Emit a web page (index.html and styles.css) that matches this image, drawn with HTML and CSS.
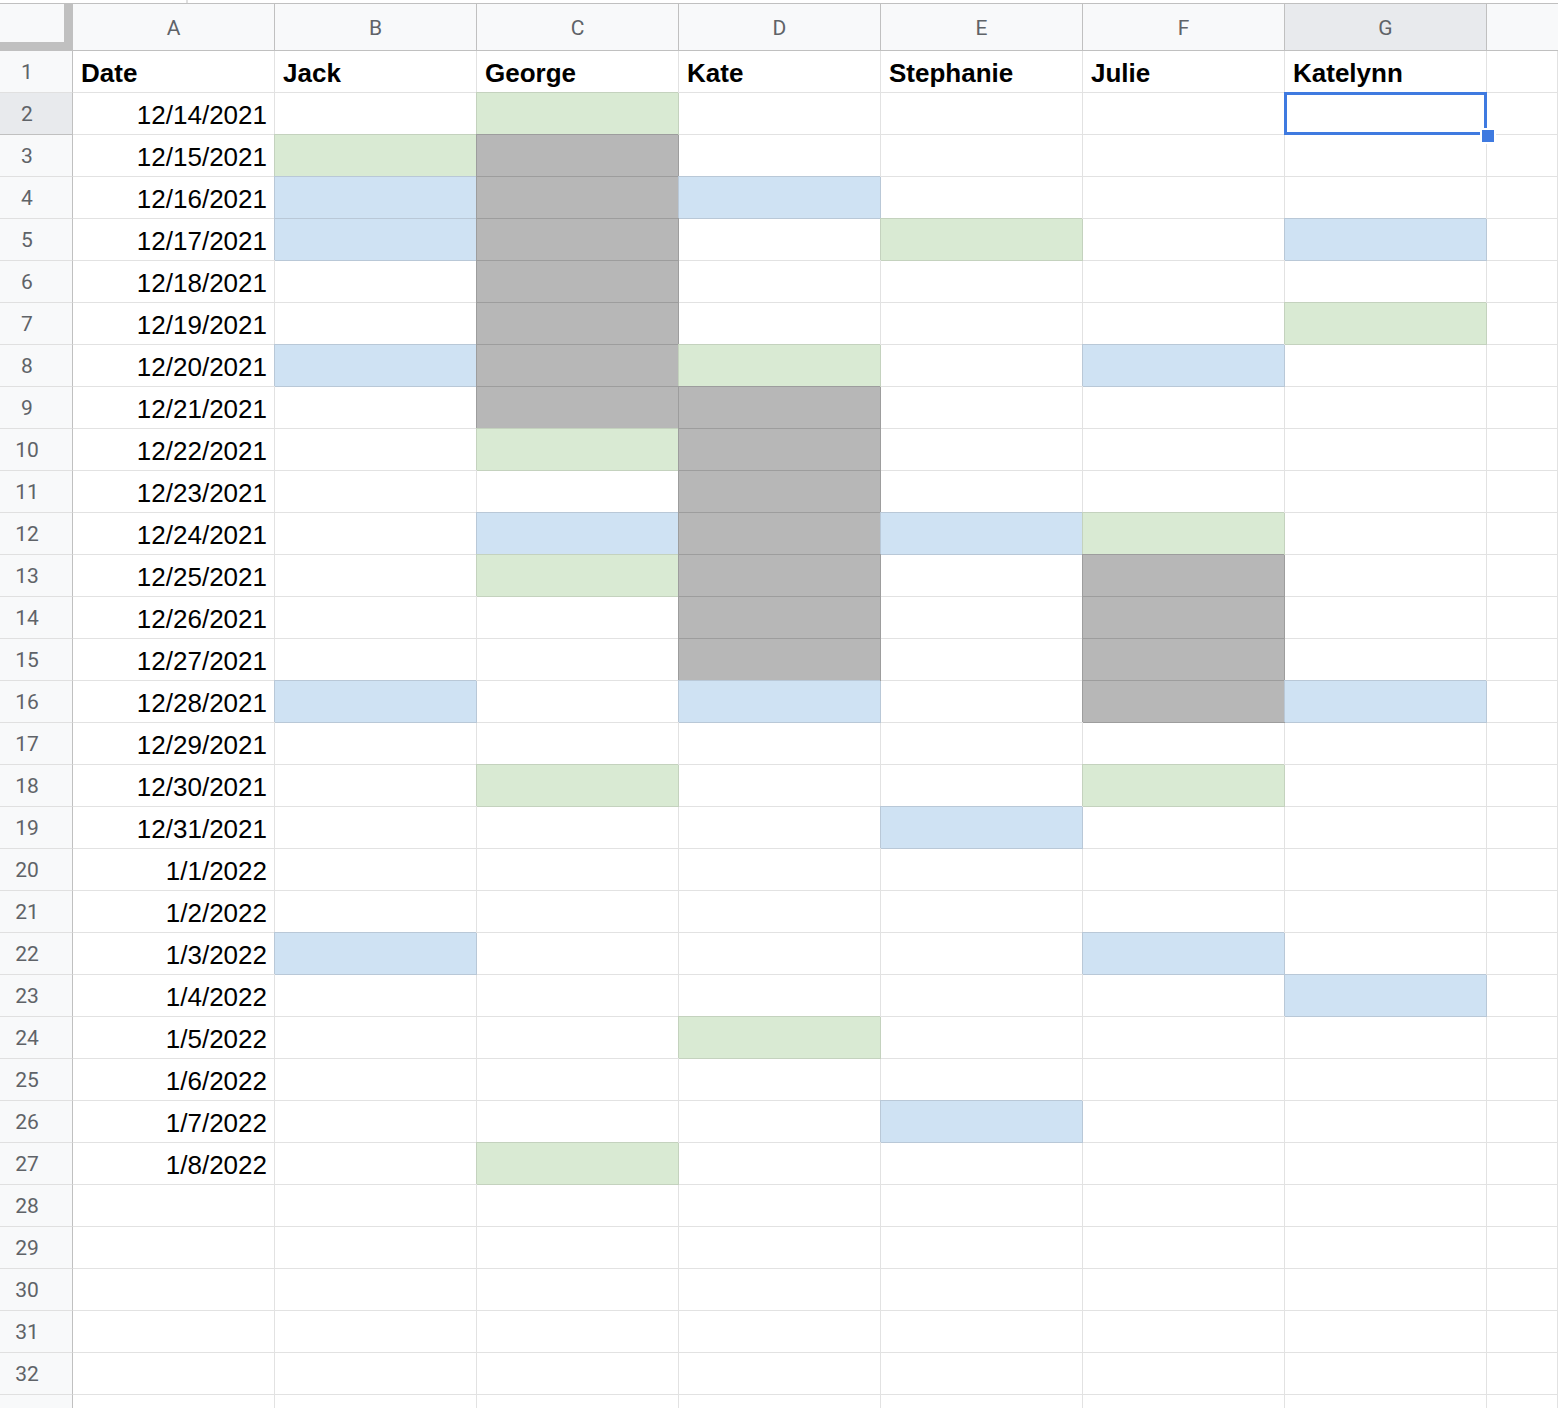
FILE: index.html
```html
<!DOCTYPE html>
<html>
<head>
<meta charset="utf-8">
<title>Sheet</title>
<link rel="stylesheet" href="styles.css">
</head>
<body>
<div class="top"></div>
<div class="row colhead">
  <div class="corner"></div>
  <div class="ch">A</div><div class="ch">B</div><div class="ch">C</div><div class="ch">D</div><div class="ch">E</div><div class="ch">F</div><div class="ch on">G</div><div class="ch"></div>
</div>
<div class="row"><div class="rh">1</div><div class="c t">Date</div><div class="c t">Jack</div><div class="c t">George</div><div class="c t">Kate</div><div class="c t">Stephanie</div><div class="c t">Julie</div><div class="c t">Katelynn</div><div class="c"></div></div>
<div class="row"><div class="rh on">2</div><div class="c d">12/14/2021</div><div class="c"></div><div class="c g"></div><div class="c"></div><div class="c"></div><div class="c"></div><div class="c sel"></div><div class="c"></div></div>
<div class="row"><div class="rh">3</div><div class="c d">12/15/2021</div><div class="c g"></div><div class="c k"></div><div class="c"></div><div class="c"></div><div class="c"></div><div class="c"></div><div class="c"></div></div>
<div class="row"><div class="rh">4</div><div class="c d">12/16/2021</div><div class="c b"></div><div class="c k"></div><div class="c b"></div><div class="c"></div><div class="c"></div><div class="c"></div><div class="c"></div></div>
<div class="row"><div class="rh">5</div><div class="c d">12/17/2021</div><div class="c b"></div><div class="c k"></div><div class="c"></div><div class="c g"></div><div class="c"></div><div class="c b"></div><div class="c"></div></div>
<div class="row"><div class="rh">6</div><div class="c d">12/18/2021</div><div class="c"></div><div class="c k"></div><div class="c"></div><div class="c"></div><div class="c"></div><div class="c"></div><div class="c"></div></div>
<div class="row"><div class="rh">7</div><div class="c d">12/19/2021</div><div class="c"></div><div class="c k"></div><div class="c"></div><div class="c"></div><div class="c"></div><div class="c g"></div><div class="c"></div></div>
<div class="row"><div class="rh">8</div><div class="c d">12/20/2021</div><div class="c b"></div><div class="c k"></div><div class="c g"></div><div class="c"></div><div class="c b"></div><div class="c"></div><div class="c"></div></div>
<div class="row"><div class="rh">9</div><div class="c d">12/21/2021</div><div class="c"></div><div class="c k"></div><div class="c k"></div><div class="c"></div><div class="c"></div><div class="c"></div><div class="c"></div></div>
<div class="row"><div class="rh">10</div><div class="c d">12/22/2021</div><div class="c"></div><div class="c g"></div><div class="c k"></div><div class="c"></div><div class="c"></div><div class="c"></div><div class="c"></div></div>
<div class="row"><div class="rh">11</div><div class="c d">12/23/2021</div><div class="c"></div><div class="c"></div><div class="c k"></div><div class="c"></div><div class="c"></div><div class="c"></div><div class="c"></div></div>
<div class="row"><div class="rh">12</div><div class="c d">12/24/2021</div><div class="c"></div><div class="c b"></div><div class="c k"></div><div class="c b"></div><div class="c g"></div><div class="c"></div><div class="c"></div></div>
<div class="row"><div class="rh">13</div><div class="c d">12/25/2021</div><div class="c"></div><div class="c g"></div><div class="c k"></div><div class="c"></div><div class="c k"></div><div class="c"></div><div class="c"></div></div>
<div class="row"><div class="rh">14</div><div class="c d">12/26/2021</div><div class="c"></div><div class="c"></div><div class="c k"></div><div class="c"></div><div class="c k"></div><div class="c"></div><div class="c"></div></div>
<div class="row"><div class="rh">15</div><div class="c d">12/27/2021</div><div class="c"></div><div class="c"></div><div class="c k"></div><div class="c"></div><div class="c k"></div><div class="c"></div><div class="c"></div></div>
<div class="row"><div class="rh">16</div><div class="c d">12/28/2021</div><div class="c b"></div><div class="c"></div><div class="c b"></div><div class="c"></div><div class="c k"></div><div class="c b"></div><div class="c"></div></div>
<div class="row"><div class="rh">17</div><div class="c d">12/29/2021</div><div class="c"></div><div class="c"></div><div class="c"></div><div class="c"></div><div class="c"></div><div class="c"></div><div class="c"></div></div>
<div class="row"><div class="rh">18</div><div class="c d">12/30/2021</div><div class="c"></div><div class="c g"></div><div class="c"></div><div class="c"></div><div class="c g"></div><div class="c"></div><div class="c"></div></div>
<div class="row"><div class="rh">19</div><div class="c d">12/31/2021</div><div class="c"></div><div class="c"></div><div class="c"></div><div class="c b"></div><div class="c"></div><div class="c"></div><div class="c"></div></div>
<div class="row"><div class="rh">20</div><div class="c d">1/1/2022</div><div class="c"></div><div class="c"></div><div class="c"></div><div class="c"></div><div class="c"></div><div class="c"></div><div class="c"></div></div>
<div class="row"><div class="rh">21</div><div class="c d">1/2/2022</div><div class="c"></div><div class="c"></div><div class="c"></div><div class="c"></div><div class="c"></div><div class="c"></div><div class="c"></div></div>
<div class="row"><div class="rh">22</div><div class="c d">1/3/2022</div><div class="c b"></div><div class="c"></div><div class="c"></div><div class="c"></div><div class="c b"></div><div class="c"></div><div class="c"></div></div>
<div class="row"><div class="rh">23</div><div class="c d">1/4/2022</div><div class="c"></div><div class="c"></div><div class="c"></div><div class="c"></div><div class="c"></div><div class="c b"></div><div class="c"></div></div>
<div class="row"><div class="rh">24</div><div class="c d">1/5/2022</div><div class="c"></div><div class="c"></div><div class="c g"></div><div class="c"></div><div class="c"></div><div class="c"></div><div class="c"></div></div>
<div class="row"><div class="rh">25</div><div class="c d">1/6/2022</div><div class="c"></div><div class="c"></div><div class="c"></div><div class="c"></div><div class="c"></div><div class="c"></div><div class="c"></div></div>
<div class="row"><div class="rh">26</div><div class="c d">1/7/2022</div><div class="c"></div><div class="c"></div><div class="c"></div><div class="c b"></div><div class="c"></div><div class="c"></div><div class="c"></div></div>
<div class="row"><div class="rh">27</div><div class="c d">1/8/2022</div><div class="c"></div><div class="c g"></div><div class="c"></div><div class="c"></div><div class="c"></div><div class="c"></div><div class="c"></div></div>
<div class="row"><div class="rh">28</div><div class="c"></div><div class="c"></div><div class="c"></div><div class="c"></div><div class="c"></div><div class="c"></div><div class="c"></div><div class="c"></div></div>
<div class="row"><div class="rh">29</div><div class="c"></div><div class="c"></div><div class="c"></div><div class="c"></div><div class="c"></div><div class="c"></div><div class="c"></div><div class="c"></div></div>
<div class="row"><div class="rh">30</div><div class="c"></div><div class="c"></div><div class="c"></div><div class="c"></div><div class="c"></div><div class="c"></div><div class="c"></div><div class="c"></div></div>
<div class="row"><div class="rh">31</div><div class="c"></div><div class="c"></div><div class="c"></div><div class="c"></div><div class="c"></div><div class="c"></div><div class="c"></div><div class="c"></div></div>
<div class="row"><div class="rh">32</div><div class="c"></div><div class="c"></div><div class="c"></div><div class="c"></div><div class="c"></div><div class="c"></div><div class="c"></div><div class="c"></div></div>
<div class="row"><div class="rh">33</div><div class="c"></div><div class="c"></div><div class="c"></div><div class="c"></div><div class="c"></div><div class="c"></div><div class="c"></div><div class="c"></div></div>
</body>
</html>
```
FILE: styles.css
```css
* { box-sizing: border-box; }
html, body { margin: 0; padding: 0; background: #fff; }
body {
  width: 1558px;
  height: 1408px;
  overflow: hidden;
  font-family: "Liberation Sans", Arial, sans-serif;
}
.top {
  height: 3px;
  background: linear-gradient(to right, #fff 186px, #e0e0e0 186px, #e0e0e0 188px, #fff 188px);
}
.row {
  display: grid;
  grid-template-columns: 73px repeat(7, 202px) 1fr;
  height: 42px;
}
.colhead {
  height: 48px;
  border-top: 1px solid #c0c0c0;
  background: #f8f9fa;
}
.corner {
  background: #f8f9fa;
  border-right: 9px solid #c0c0c0;
  border-bottom: 9px solid #c0c0c0;
}
.ch {
  border-right: 1px solid #c0c0c0;
  border-bottom: 1px solid #c0c0c0;
  display: flex;
  align-items: center;
  justify-content: center;
  font-family: Roboto, "Liberation Sans", sans-serif;
  font-size: 21px;
  color: #5f6368;
  padding-top: 2px;
}
.ch.on { background: #e8eaed; }
.ch:last-child { border-right: 0; }
.rh {
  background: #f8f9fa;
  border-right: 1px solid #c0c0c0;
  border-bottom: 1px solid #e0e0e0;
  display: flex;
  align-items: center;
  justify-content: center;
  padding-right: 18px;
  font-family: Roboto, "Liberation Sans", sans-serif;
  font-size: 21px;
  color: #5f6368;
}
.rh.on { background: #e8eaed; border-bottom-color: #c0c0c0; }
.c {
  border-right: 1px solid #e2e2e2;
  border-bottom: 1px solid #e2e2e2;
  background: #fff;
  font-size: 26px;
  line-height: 37px;
  padding: 4px 7px 0 8px;
  white-space: nowrap;
  overflow: hidden;
  color: #000;
}
.c.t { font-weight: bold; }
.c.d { text-align: right; }
.c.b { background: #cfe2f3; border-color: #b9c8d7; box-shadow: -1px -1px 0 #b9c8d7; }
.c.g { background: #d9ead3; border-color: #c4d2be; box-shadow: -1px -1px 0 #c4d2be; }
.c.k { background: #b7b7b7; border-color: #9d9d9d; box-shadow: -1px -1px 0 #9d9d9d; }
.c.sel { position: relative; overflow: visible; }
.c.sel::before {
  content: "";
  position: absolute;
  left: -1px;
  top: -1px;
  right: -1px;
  bottom: -1px;
  border: 3px solid #3f7ae0;
  z-index: 2;
}
.c.sel::after {
  content: "";
  position: absolute;
  right: -8px;
  bottom: -8px;
  width: 12px;
  height: 12px;
  background: #3f7ae0;
  box-shadow: 0 0 0 2px #fff;
  z-index: 3;
}
```
